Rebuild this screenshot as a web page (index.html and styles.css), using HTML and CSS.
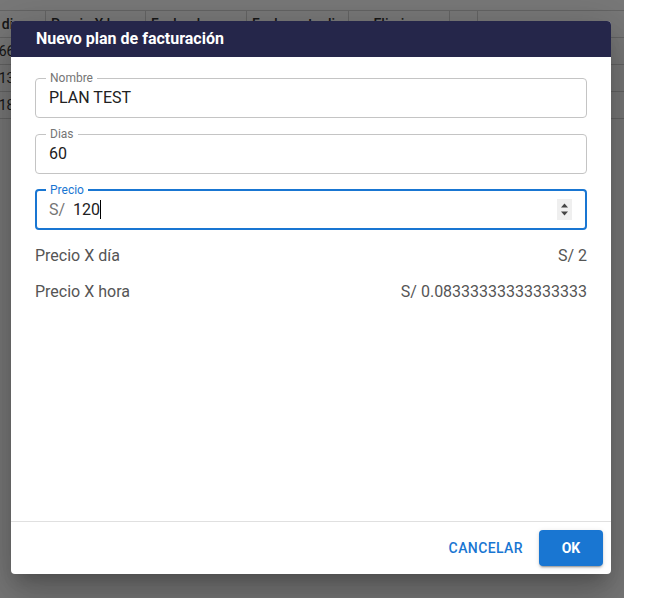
FILE: index.html
```html
<!DOCTYPE html>
<html lang="es">
<head>
    <meta charset="UTF-8">
    <title>Planes de facturación</title>
    <link rel="stylesheet" href="styles.css">
</head>
<body>
<div id="page">
    <div class="tablewrap">
        <table class="planes">
            <colgroup>
                <col class="c1"><col class="c2"><col class="c3"><col class="c4"><col class="c5"><col class="c6"><col class="c7">
            </colgroup>
            <tr>
                <th>Precio X dia</th>
                <th>Precio X hora</th>
                <th>Fecha de creación</th>
                <th>Fecha actualizado</th>
                <th class="center">Eliminar</th>
                <th></th>
                <th></th>
            </tr>
            <tr>
                <td>S/ 0.08166</td><td></td><td></td><td></td><td></td><td></td><td></td>
            </tr>
            <tr>
                <td>S/ 0.05213</td><td></td><td></td><td></td><td></td><td></td><td></td>
            </tr>
            <tr>
                <td>S/ 0.07418</td><td></td><td></td><td></td><td></td><td></td><td></td>
            </tr>
        </table>
    </div>

    <div class="backdrop"></div>

    <div class="dialog">
        <div class="dlg-title">Nuevo plan de facturación</div>
        <div class="dlg-content">
            <fieldset class="field">
                <legend>Nombre</legend>
                <div class="field-row"><span class="value">PLAN TEST</span></div>
            </fieldset>
            <fieldset class="field">
                <legend>Dias</legend>
                <div class="field-row"><span class="value">60</span></div>
            </fieldset>
            <fieldset class="field focused">
                <legend>Precio</legend>
                <div class="field-row">
                    <span class="adorn">S/</span>
                    <span class="value">120</span><span class="caret"></span>
                    <span class="spin">
                        <svg width="15" height="21" viewBox="0 0 15 21">
                            <path d="M4 8.5 L7.5 4.5 L11 8.5 Z" fill="#444"/>
                            <path d="M4 12.5 L7.5 16.5 L11 12.5 Z" fill="#444"/>
                        </svg>
                    </span>
                </div>
            </fieldset>

            <div class="info">
                <span>Precio X día</span>
                <span>S/ 2</span>
            </div>
            <div class="info">
                <span>Precio X hora</span>
                <span>S/ 0.08333333333333333</span>
            </div>
        </div>
        <div class="dlg-actions">
            <span class="btn-text">CANCELAR</span>
            <span class="btn-ok">OK</span>
        </div>
    </div>
</div>
</body>
</html>
```

FILE: styles.css
```css
body {
    margin: 0px;
    padding: 0px;
    background: #fff;
    font-family: Roboto, "Liberation Sans", Arial, sans-serif;
}

#page {
    position: relative;
    width: 624px;
    height: 598px;
    overflow: hidden;
    background: #fff;
}

.tablewrap {
    padding-top: 10px;
    overflow: hidden;
}

/* tabla de planes detras del dialogo */
.planes {
    border-collapse: collapse;
    margin-left: -60px;
    width: 737px;
    font-size: 14px;
    color: #333;
    table-layout: fixed;
}

.planes col.c1 { width: 105px; }
.planes col.c2 { width: 100px; }
.planes col.c3 { width: 101px; }
.planes col.c4 { width: 102px; }
.planes col.c5 { width: 101px; }
.planes col.c6 { width: 28px; }
.planes col.c7 { width: 200px; }

.planes th, .planes td {
    border: 1px solid #d4d4d4;
    height: 26px;
    padding: 0 5px;
    white-space: nowrap;
    overflow: hidden;
    text-align: left;
    font-weight: 500;
}

.planes td {
    font-weight: 400;
}

.planes .center {
    text-align: center;
}

.backdrop {
    position: absolute;
    left: 0;
    top: 0;
    right: 0;
    bottom: 0;
    background: rgba(0, 0, 0, 0.53);
}

.dialog {
    position: absolute;
    left: 11px;
    top: 21px;
    width: 600px;
    height: 553px;
    background: #fff;
    border-radius: 4px;
    overflow: hidden;
    display: flex;
    flex-direction: column;
    box-shadow: 0 11px 15px -7px rgba(0,0,0,0.2), 0 24px 38px 3px rgba(0,0,0,0.14), 0 9px 46px 8px rgba(0,0,0,0.12);
}

.dlg-title {
    height: 36px;
    line-height: 36px;
    background: #25264a;
    color: #fff;
    font-size: 16px;
    font-weight: 700;
    padding-left: 25px;
}

.dlg-content {
    flex: 1;
    padding: 15px 24px 0 24px;
}

.field {
    margin: 0 0 10px 0;
    padding: 0 10px 7px 10px;
    border: 1px solid #c4c4c4;
    border-radius: 4px;
    min-width: 0;
}

.field legend {
    font-size: 12px;
    line-height: 12px;
    color: #757575;
    padding: 0 4px;
}

.field-row {
    display: flex;
    align-items: center;
    height: 26px;
    padding-left: 3px;
}

.value {
    font-size: 16px;
    color: #212121;
}

.field.focused {
    border: 2px solid #1976d2;
    padding: 0 9px 6px 9px;
    margin-bottom: 7px;
}

.field.focused legend {
    color: #1976d2;
}

.adorn {
    font-size: 16px;
    color: #757575;
    margin-right: 8px;
}

.caret {
    display: inline-block;
    width: 1px;
    height: 19px;
    background: #000;
}

.spin {
    margin-left: auto;
    margin-right: 4px;
    width: 15px;
    height: 21px;
    background: #efefef;
}

.spin svg {
    display: block;
}

.info {
    display: flex;
    justify-content: space-between;
    align-items: center;
    height: 36px;
    font-size: 16px;
    color: #555;
}

.dlg-actions {
    border-top: 1px solid #e0e0e0;
    height: 52px;
    display: flex;
    align-items: center;
    justify-content: flex-end;
    padding-right: 8px;
    gap: 16px;
}

.btn-text {
    font-size: 14px;
    font-weight: 500;
    letter-spacing: 0.4px;
    color: #1976d2;
}

.btn-ok {
    width: 64px;
    height: 36px;
    line-height: 36px;
    text-align: center;
    background: #1976d2;
    color: #fff;
    font-size: 14px;
    font-weight: 700;
    border-radius: 4px;
    box-shadow: 0 3px 1px -2px rgba(0,0,0,0.2), 0 2px 2px 0 rgba(0,0,0,0.14), 0 1px 5px 0 rgba(0,0,0,0.12);
}
```
